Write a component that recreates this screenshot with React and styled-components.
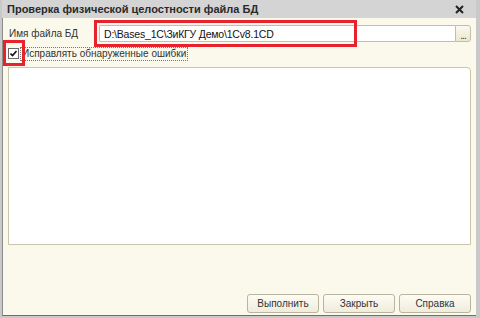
import React from "react";
import styled, { createGlobalStyle } from "styled-components";

const GlobalStyle = createGlobalStyle`
  html, body {
    margin: 0;
    padding: 0;
    background: #c8c8c8;
  }
  body {
    font-family: "Liberation Sans", Arial, sans-serif;
    font-size: 10px;
    color: #1a1a1a;
  }
`;

const Window = styled.div`
  width: 480px;
  height: 318px;
  box-sizing: border-box;
  display: flex;
  flex-direction: column;
  background: #c9c9c9;
  padding: 0 4px 2px 2px;
`;

const TitleBar = styled.div`
  height: 18px;
  flex: none;
  display: flex;
  align-items: center;
  justify-content: space-between;
  padding: 0 12px 0 5px;
  background: #d4d4d4;
  font-size: 11px;
  font-weight: bold;
  color: #2a2a2a;
`;

const Close = styled.svg`
  width: 9px;
  height: 9px;
`;

const Body = styled.div`
  flex: 1;
  position: relative;
  display: flex;
  flex-direction: column;
  background: #fbf9eb;
  border-left: 1px solid #8c8c8c;
  border-bottom: 1px solid #6e6e6e;
  padding: 7px 5px 2px 5px;
`;

const FieldRow = styled.div`
  display: flex;
  align-items: center;
  height: 17px;
`;

const Label = styled.div`
  width: 90px;
  padding-left: 1px;
  color: #333;
`;

const InputWrap = styled.div`
  flex: 1;
  position: relative;
  display: flex;
  height: 17px;
`;

const Input = styled.div`
  flex: 1;
  background: #fff;
  border: 1px solid #c2c0a4;
  border-right: none;
  border-radius: 2px 0 0 2px;
  padding-left: 4px;
  display: flex;
  align-items: center;
  color: #111;
  font-size: 10.5px;
  letter-spacing: -0.2px;
`;

const DotsButton = styled.div`
  width: 14px;
  border: 1px solid #c2c0a4;
  border-radius: 0 3px 3px 0;
  background: linear-gradient(#fbf9ef, #ebe7d2);
  display: flex;
  align-items: flex-end;
  justify-content: center;
  font-size: 10px;
  line-height: 11px;
  letter-spacing: -1px;
  color: #333;
`;

const Highlight = styled.div`
  position: absolute;
  left: ${(p) => p.$left}px;
  top: ${(p) => p.$top}px;
  width: ${(p) => p.$w}px;
  height: ${(p) => p.$h}px;
  box-sizing: border-box;
  border: 3px solid #e8222c;
  pointer-events: none;
`;

const CheckRow = styled.div`
  position: relative;
  display: flex;
  align-items: center;
  margin-top: 5px;
  height: 13px;
`;

const CheckBox = styled.div`
  width: 9px;
  height: 9px;
  background: #fff;
  border: 1px solid #6a6a6a;
  display: flex;
  align-items: center;
  justify-content: center;
`;

const CheckLabel = styled.div`
  margin-left: 1px;
  padding: 0 1px;
  height: 12px;
  line-height: 12px;
  border: 1px dotted #777;
  color: #333;
`;

const Memo = styled.div`
  margin-top: 7px;
  height: 176px;
  background: #fff;
  border: 1px solid #c9c7ab;
  border-radius: 0 4px 0 0;
`;

const ButtonRow = styled.div`
  margin-top: auto;
  display: flex;
  justify-content: flex-end;
  gap: 4px;
`;

const Button = styled.div`
  width: 72px;
  height: 19px;
  box-sizing: border-box;
  display: flex;
  align-items: center;
  justify-content: center;
  border: 1px solid #b8b59c;
  border-radius: 3px;
  background: linear-gradient(#fdfcf5, #efecdc);
  color: #333;
`;

export default function App() {
  return (
    <>
      <GlobalStyle />
      <Window>
        <TitleBar>
          <span>Проверка физической целостности файла БД</span>
          <Close viewBox="0 0 9 9">
            <path d="M1 1 L8 8 M8 1 L1 8" stroke="#222" strokeWidth="2" />
          </Close>
        </TitleBar>
        <Body>
          <FieldRow>
            <Label>Имя файла БД</Label>
            <InputWrap>
              <Input>D:\Bases_1C\ЗиКГУ Демо\1Cv8.1CD</Input>
              <DotsButton>...</DotsButton>
              <Highlight $left={-5} $top={-5} $w={263} $h={27} />
            </InputWrap>
          </FieldRow>
          <CheckRow>
            <CheckBox>
              <svg width="7" height="7" viewBox="0 0 7 7">
                <path d="M0.5 3.5 L2.5 5.5 L6.5 1" stroke="#111" strokeWidth="1.6" fill="none" />
              </svg>
            </CheckBox>
            <CheckLabel>Исправлять обнаруженные ошибки</CheckLabel>
            <Highlight $left={-5} $top={-7} $w={22} $h={26} />
          </CheckRow>
          <Memo />
          <ButtonRow>
            <Button>Выполнить</Button>
            <Button>Закрыть</Button>
            <Button>Справка</Button>
          </ButtonRow>
        </Body>
      </Window>
    </>
  );
}
